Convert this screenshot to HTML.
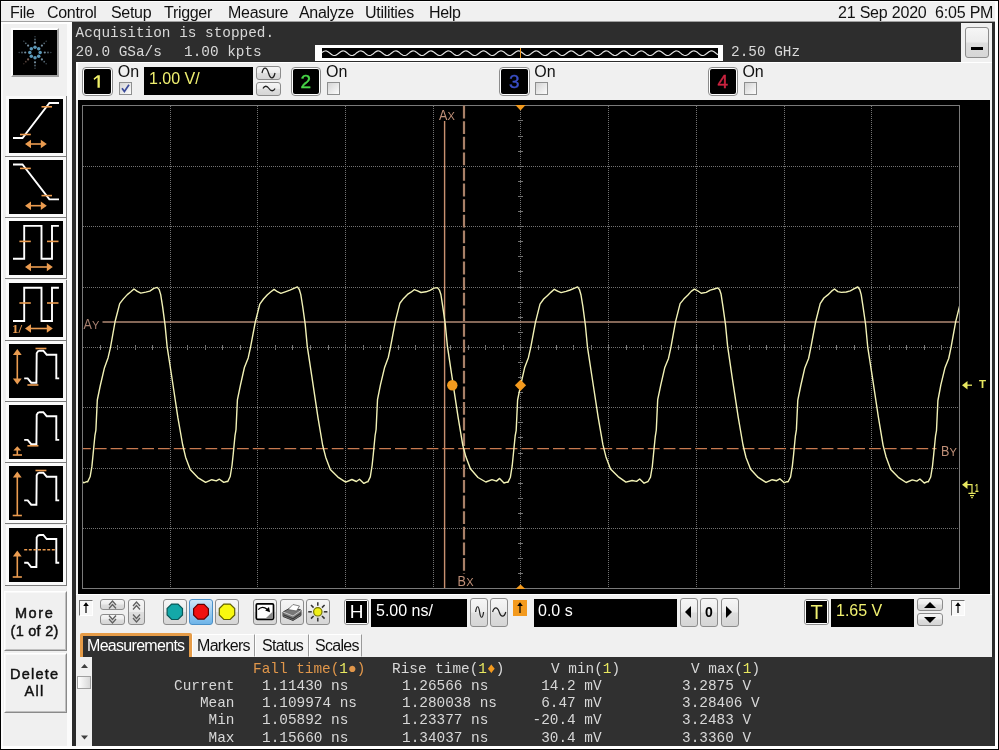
<!DOCTYPE html><html><head><meta charset="utf-8"><title>scope</title><style>
html,body{margin:0;padding:0;}
body{width:999px;height:750px;background:#000;position:relative;overflow:hidden;font-family:"Liberation Sans",sans-serif;}
.abs{position:absolute;}
div,span{position:absolute;box-sizing:border-box;white-space:pre;}
.menu{font-size:16px;color:#111;top:2.5px;line-height:19px;letter-spacing:-.3px;}
.mono{font-family:"Liberation Mono",monospace;font-size:14.4px;line-height:17px;color:#d8d8d8;}
.btn{border:1px solid #8c8c8c;border-radius:3px;background:linear-gradient(#f6f6f6,#ececec 48%,#dedede 52%,#d6d6d6);}
.field{background:#000;}
.icon{background:#000;overflow:hidden;}
.sbt{font-size:14.5px;line-height:18px;text-align:center;color:#111;letter-spacing:.6px;-webkit-text-stroke:.45px #111;}
.ftxt{font-size:16px;line-height:22px;}
.tab{font-size:16px;line-height:19px;letter-spacing:-.7px;}
</style></head><body><div id="root" style="left:0;top:0;width:999px;height:750px;will-change:transform">
<div style="left:1px;top:1px;width:997px;height:748px;background:#fff"></div>
<div style="left:1px;top:1px;width:994px;height:745px;background:#f0f0f0"></div>
<div style="left:1px;top:1px;width:994px;height:1px;background:#fcfcfc"></div>
<span class="menu" style="left:10px">File</span>
<span class="menu" style="left:47px">Control</span>
<span class="menu" style="left:111px">Setup</span>
<span class="menu" style="left:164px">Trigger</span>
<span class="menu" style="left:228px">Measure</span>
<span class="menu" style="left:299px">Analyze</span>
<span class="menu" style="left:365px">Utilities</span>
<span class="menu" style="left:429px">Help</span>
<span class="menu" style="left:838px;letter-spacing:-.2px">21 Sep 2020  6:05 PM</span>
<div style="left:1px;top:21px;width:994px;height:1px;background:#a0a0a0"></div>
<div style="left:1px;top:22px;width:71px;height:2px;background:#fff"></div>
<div style="left:72px;top:22px;width:923px;height:724px;background:#2b2b2b"></div>
<div style="left:76px;top:23px;width:916px;height:723px;background:#f0f0f0"></div>
<div style="left:72px;top:22px;width:889px;height:40px;background:#2d2d2d"></div>
<span class="mono" style="left:75.5px;top:25px">Acquisition is stopped.</span>
<span class="mono" style="left:75.5px;top:43.5px">20.0 GSa/s</span>
<span class="mono" style="left:184px;top:43.5px">1.00 kpts</span>
<span class="mono" style="left:731px;top:43.5px">2.50 GHz</span>
<div style="left:315px;top:45px;width:408px;height:15.5px;background:#fff"></div>
<div style="left:322px;top:48px;width:396px;height:10px;background:#000"></div>
<svg class="abs" style="left:0;top:0" width="999" height="70"><polyline points="322.0,52.6 323.0,51.8 324.0,51.3 325.0,51.0 326.0,50.9 327.0,51.2 328.0,51.7 329.0,52.4 330.0,53.2 331.0,54.0 332.0,54.7 333.0,55.2 334.0,55.5 335.0,55.4 336.0,55.1 337.0,54.6 338.0,53.8 339.0,53.0 340.0,52.2 341.0,51.5 342.0,51.1 343.0,50.9 344.0,51.0 345.0,51.4 346.0,52.0 347.0,52.8 348.0,53.6 349.0,54.4 350.0,55.0 351.0,55.4 352.0,55.5 353.0,55.3 354.0,54.9 355.0,54.2 356.0,53.4 357.0,52.6 358.0,51.9 359.0,51.3 360.0,51.0 361.0,50.9 362.0,51.2 363.0,51.6 364.0,52.3 365.0,53.1 366.0,54.0 367.0,54.7 368.0,55.2 369.0,55.5 370.0,55.5 371.0,55.2 372.0,54.6 373.0,53.9 374.0,53.1 375.0,52.3 376.0,51.6 377.0,51.1 378.0,50.9 379.0,51.0 380.0,51.4 381.0,51.9 382.0,52.7 383.0,53.5 384.0,54.3 385.0,54.9 386.0,55.4 387.0,55.5 388.0,55.4 389.0,54.9 390.0,54.3 391.0,53.5 392.0,52.7 393.0,51.9 394.0,51.3 395.0,51.0 396.0,50.9 397.0,51.1 398.0,51.6 399.0,52.3 400.0,53.1 401.0,53.9 402.0,54.6 403.0,55.2 404.0,55.5 405.0,55.5 406.0,55.2 407.0,54.7 408.0,53.9 409.0,53.1 410.0,52.3 411.0,51.6 412.0,51.1 413.0,50.9 414.0,51.0 415.0,51.3 416.0,51.9 417.0,52.6 418.0,53.5 419.0,54.2 420.0,54.9 421.0,55.3 422.0,55.5 423.0,55.4 424.0,55.0 425.0,54.3 426.0,53.6 427.0,52.8 428.0,52.0 429.0,51.4 430.0,51.0 431.0,50.9 432.0,51.1 433.0,51.6 434.0,52.2 435.0,53.0 436.0,53.8 437.0,54.6 438.0,55.1 439.0,55.4 440.0,55.5 441.0,55.2 442.0,54.7 443.0,54.0 444.0,53.2 445.0,52.4 446.0,51.7 447.0,51.2 448.0,50.9 449.0,51.0 450.0,51.3 451.0,51.8 452.0,52.6 453.0,53.4 454.0,54.2 455.0,54.9 456.0,55.3 457.0,55.5 458.0,55.4 459.0,55.0 460.0,54.4 461.0,53.6 462.0,52.8 463.0,52.0 464.0,51.4 465.0,51.0 466.0,50.9 467.0,51.1 468.0,51.5 469.0,52.2 470.0,52.9 471.0,53.8 472.0,54.5 473.0,55.1 474.0,55.4 475.0,55.5 476.0,55.3 477.0,54.8 478.0,54.1 479.0,53.3 480.0,52.5 481.0,51.7 482.0,51.2 483.0,50.9 484.0,50.9 485.0,51.2 486.0,51.8 487.0,52.5 488.0,53.3 489.0,54.1 490.0,54.8 491.0,55.3 492.0,55.5 493.0,55.4 494.0,55.1 495.0,54.5 496.0,53.7 497.0,52.9 498.0,52.1 499.0,51.5 500.0,51.0 501.0,50.9 502.0,51.0 503.0,51.5 504.0,52.1 505.0,52.9 506.0,53.7 507.0,54.5 508.0,55.1 509.0,55.4 510.0,55.5 511.0,55.3 512.0,54.8 513.0,54.1 514.0,53.3 515.0,52.5 516.0,51.8 517.0,51.2 518.0,50.9 519.0,50.9 520.0,51.2 521.0,51.7 522.0,52.5 523.0,53.3 524.0,54.1 525.0,54.8 526.0,55.3 527.0,55.5 528.0,55.4 529.0,55.1 530.0,54.5 531.0,53.8 532.0,52.9 533.0,52.2 534.0,51.5 535.0,51.1 536.0,50.9 537.0,51.0 538.0,51.4 539.0,52.0 540.0,52.8 541.0,53.6 542.0,54.4 543.0,55.0 544.0,55.4 545.0,55.5 546.0,55.3 547.0,54.9 548.0,54.2 549.0,53.4 550.0,52.6 551.0,51.8 552.0,51.3 553.0,51.0 554.0,50.9 555.0,51.2 556.0,51.7 557.0,52.4 558.0,53.2 559.0,54.0 560.0,54.7 561.0,55.2 562.0,55.5 563.0,55.4 564.0,55.1 565.0,54.6 566.0,53.8 567.0,53.0 568.0,52.2 569.0,51.6 570.0,51.1 571.0,50.9 572.0,51.0 573.0,51.4 574.0,52.0 575.0,52.8 576.0,53.6 577.0,54.3 578.0,55.0 579.0,55.4 580.0,55.5 581.0,55.3 582.0,54.9 583.0,54.2 584.0,53.5 585.0,52.6 586.0,51.9 587.0,51.3 588.0,51.0 589.0,50.9 590.0,51.1 591.0,51.6 592.0,52.3 593.0,53.1 594.0,53.9 595.0,54.7 596.0,55.2 597.0,55.5 598.0,55.5 599.0,55.2 600.0,54.6 601.0,53.9 602.0,53.1 603.0,52.3 604.0,51.6 605.0,51.1 606.0,50.9 607.0,51.0 608.0,51.3 609.0,51.9 610.0,52.7 611.0,53.5 612.0,54.3 613.0,54.9 614.0,55.4 615.0,55.5 616.0,55.4 617.0,54.9 618.0,54.3 619.0,53.5 620.0,52.7 621.0,51.9 622.0,51.4 623.0,51.0 624.0,50.9 625.0,51.1 626.0,51.6 627.0,52.3 628.0,53.1 629.0,53.9 630.0,54.6 631.0,55.2 632.0,55.5 633.0,55.5 634.0,55.2 635.0,54.7 636.0,54.0 637.0,53.1 638.0,52.3 639.0,51.6 640.0,51.2 641.0,50.9 642.0,51.0 643.0,51.3 644.0,51.9 645.0,52.6 646.0,53.4 647.0,54.2 648.0,54.9 649.0,55.3 650.0,55.5 651.0,55.4 652.0,55.0 653.0,54.4 654.0,53.6 655.0,52.8 656.0,52.0 657.0,51.4 658.0,51.0 659.0,50.9 660.0,51.1 661.0,51.5 662.0,52.2 663.0,53.0 664.0,53.8 665.0,54.6 666.0,55.1 667.0,55.4 668.0,55.5 669.0,55.2 670.0,54.7 671.0,54.0 672.0,53.2 673.0,52.4 674.0,51.7 675.0,51.2 676.0,50.9 677.0,51.0 678.0,51.3 679.0,51.8 680.0,52.6 681.0,53.4 682.0,54.2 683.0,54.8 684.0,55.3 685.0,55.5 686.0,55.4 687.0,55.0 688.0,54.4 689.0,53.7 690.0,52.8 691.0,52.1 692.0,51.4 693.0,51.0 694.0,50.9 695.0,51.1 696.0,51.5 697.0,52.1 698.0,52.9 699.0,53.8 700.0,54.5 701.0,55.1 702.0,55.4 703.0,55.5 704.0,55.3 705.0,54.8 706.0,54.1 707.0,53.3 708.0,52.5 709.0,51.7 710.0,51.2 711.0,50.9 712.0,50.9 713.0,51.2 714.0,51.8 715.0,52.5 716.0,53.3 717.0,54.1 718.0,54.8" fill="none" stroke="#e0e0e0" stroke-width="1.2"/><line x1="520.5" y1="48" x2="520.5" y2="58" stroke="#f39a1e" stroke-width="1"/></svg>
<div class="btn" style="left:965px;top:27px;width:24px;height:31px"></div>
<div style="left:971px;top:47px;width:12px;height:3px;background:#000"></div>
<div style="left:76px;top:62px;width:916px;height:1px;background:#fff"></div>
<div style="left:76px;top:62px;width:2px;height:38px;background:#fff"></div>
<div style="left:82.0px;top:66.5px;width:30.5px;height:29.5px;border:1px solid #8c8c8c;border-radius:4px;background:#fff"></div>
<div style="left:84.0px;top:68.5px;width:26.5px;height:25.5px;border-radius:2px;background:#000;color:#f0f068;font-size:19px;line-height:25.5px;text-align:center;-webkit-text-stroke:.4px #f0f068"></div>
<span style="left:117.8px;top:61.5px;font-size:16px;line-height:19px;color:#111">On</span>
<div style="left:119.0px;top:82px;width:13px;height:13px;border:1px solid #8e8f8f;background:linear-gradient(135deg,#d4d4d4,#fcfcfc)"></div>
<div style="left:290.5px;top:66.5px;width:30.5px;height:29.5px;border:1px solid #8c8c8c;border-radius:4px;background:#fff"></div>
<div style="left:292.5px;top:68.5px;width:26.5px;height:25.5px;border-radius:2px;background:#000;color:#48d848;font-size:19px;line-height:25.5px;text-align:center;-webkit-text-stroke:.4px #48d848">2</div>
<span style="left:326.0px;top:61.5px;font-size:16px;line-height:19px;color:#111">On</span>
<div style="left:327.2px;top:82px;width:13px;height:13px;border:1px solid #8e8f8f;background:linear-gradient(135deg,#d4d4d4,#fcfcfc)"></div>
<div style="left:499.0px;top:66.5px;width:30.5px;height:29.5px;border:1px solid #8c8c8c;border-radius:4px;background:#fff"></div>
<div style="left:501.0px;top:68.5px;width:26.5px;height:25.5px;border-radius:2px;background:#000;color:#3a4ec4;font-size:19px;line-height:25.5px;text-align:center;-webkit-text-stroke:.4px #3a4ec4">3</div>
<span style="left:534.1999999999999px;top:61.5px;font-size:16px;line-height:19px;color:#111">On</span>
<div style="left:535.4px;top:82px;width:13px;height:13px;border:1px solid #8e8f8f;background:linear-gradient(135deg,#d4d4d4,#fcfcfc)"></div>
<div style="left:707.5px;top:66.5px;width:30.5px;height:29.5px;border:1px solid #8c8c8c;border-radius:4px;background:#fff"></div>
<div style="left:709.5px;top:68.5px;width:26.5px;height:25.5px;border-radius:2px;background:#000;color:#cc2440;font-size:19px;line-height:25.5px;text-align:center;-webkit-text-stroke:.4px #cc2440">4</div>
<span style="left:742.3999999999999px;top:61.5px;font-size:16px;line-height:19px;color:#111">On</span>
<div style="left:743.6px;top:82px;width:13px;height:13px;border:1px solid #8e8f8f;background:linear-gradient(135deg,#d4d4d4,#fcfcfc)"></div>
<svg class="abs" style="left:82px;top:66px" width="31" height="31"><path d="M11.6,12.4 L15.6,9.2 L17.8,9.2 L17.8,21.8 L15.5,21.8 L15.5,11.6 L12.2,14 Z" fill="#f0f068"/></svg>
<svg class="abs" style="left:119px;top:82px" width="13" height="13"><path d="M3,6.2 L5.4,9.6 L10,2.8" fill="none" stroke="#3a4a9a" stroke-width="1.7"/></svg>
<div class="field" style="left:144px;top:67px;width:109px;height:28px"></div>
<span style="left:149px;top:68px;font-size:16px;line-height:22px;color:#f0f070">1.00 V/</span>
<div class="btn" style="left:256px;top:66px;width:25px;height:13.5px"></div>
<div class="btn" style="left:256px;top:82px;width:25px;height:13.5px"></div>
<svg class="abs" style="left:256px;top:66px" width="25" height="30"><path d="M6,7 C7.5,0.5 10.5,0.5 12.5,7 C14.5,13.5 17.5,13.5 19,7" fill="none" stroke="#202020" stroke-width="1.3"/><path d="M7,22.5 C8.5,19.5 11,19.5 13,22.5 C15,25.5 17.5,25.5 19,22.5" fill="none" stroke="#202020" stroke-width="1.3"/></svg>
<div style="left:78px;top:100px;width:912px;height:494px;background:#000"></div>
<div style="left:76px;top:594px;width:916px;height:1px;background:#fff"></div>
<svg class="abs" style="left:0;top:0" width="999" height="750" viewBox="0 0 999 750">
<rect x="82.5" y="105.5" width="877" height="483" fill="none" stroke="#7a7a7a" stroke-width="1"/>
<line x1="170.5" y1="106" x2="170.5" y2="588" stroke="#727272" stroke-width="1" stroke-dasharray="1 1"/>
<line x1="257.5" y1="106" x2="257.5" y2="588" stroke="#727272" stroke-width="1" stroke-dasharray="1 1"/>
<line x1="345.5" y1="106" x2="345.5" y2="588" stroke="#727272" stroke-width="1" stroke-dasharray="1 1"/>
<line x1="433.5" y1="106" x2="433.5" y2="588" stroke="#727272" stroke-width="1" stroke-dasharray="1 1"/>
<line x1="520.5" y1="106" x2="520.5" y2="588" stroke="#727272" stroke-width="1" stroke-dasharray="1 1"/>
<line x1="608.5" y1="106" x2="608.5" y2="588" stroke="#727272" stroke-width="1" stroke-dasharray="1 1"/>
<line x1="696.5" y1="106" x2="696.5" y2="588" stroke="#727272" stroke-width="1" stroke-dasharray="1 1"/>
<line x1="784.5" y1="106" x2="784.5" y2="588" stroke="#727272" stroke-width="1" stroke-dasharray="1 1"/>
<line x1="871.5" y1="106" x2="871.5" y2="588" stroke="#727272" stroke-width="1" stroke-dasharray="1 1"/>
<line x1="83" y1="166.5" x2="959" y2="166.5" stroke="#727272" stroke-width="1" stroke-dasharray="1 1"/>
<line x1="83" y1="226.5" x2="959" y2="226.5" stroke="#727272" stroke-width="1" stroke-dasharray="1 1"/>
<line x1="83" y1="287.5" x2="959" y2="287.5" stroke="#727272" stroke-width="1" stroke-dasharray="1 1"/>
<line x1="83" y1="347.5" x2="959" y2="347.5" stroke="#727272" stroke-width="1" stroke-dasharray="1 1"/>
<line x1="83" y1="407.5" x2="959" y2="407.5" stroke="#727272" stroke-width="1" stroke-dasharray="1 1"/>
<line x1="83" y1="468.5" x2="959" y2="468.5" stroke="#727272" stroke-width="1" stroke-dasharray="1 1"/>
<line x1="83" y1="528.5" x2="959" y2="528.5" stroke="#727272" stroke-width="1" stroke-dasharray="1 1"/>
<line x1="100.5" y1="345.0" x2="100.5" y2="350.0" stroke="#727272" stroke-width="1"/>
<line x1="117.5" y1="345.0" x2="117.5" y2="350.0" stroke="#727272" stroke-width="1"/>
<line x1="135.5" y1="345.0" x2="135.5" y2="350.0" stroke="#727272" stroke-width="1"/>
<line x1="152.5" y1="345.0" x2="152.5" y2="350.0" stroke="#727272" stroke-width="1"/>
<line x1="170.5" y1="345.0" x2="170.5" y2="350.0" stroke="#727272" stroke-width="1"/>
<line x1="187.5" y1="345.0" x2="187.5" y2="350.0" stroke="#727272" stroke-width="1"/>
<line x1="205.5" y1="345.0" x2="205.5" y2="350.0" stroke="#727272" stroke-width="1"/>
<line x1="222.5" y1="345.0" x2="222.5" y2="350.0" stroke="#727272" stroke-width="1"/>
<line x1="240.5" y1="345.0" x2="240.5" y2="350.0" stroke="#727272" stroke-width="1"/>
<line x1="257.5" y1="345.0" x2="257.5" y2="350.0" stroke="#727272" stroke-width="1"/>
<line x1="275.5" y1="345.0" x2="275.5" y2="350.0" stroke="#727272" stroke-width="1"/>
<line x1="292.5" y1="345.0" x2="292.5" y2="350.0" stroke="#727272" stroke-width="1"/>
<line x1="310.5" y1="345.0" x2="310.5" y2="350.0" stroke="#727272" stroke-width="1"/>
<line x1="328.5" y1="345.0" x2="328.5" y2="350.0" stroke="#727272" stroke-width="1"/>
<line x1="345.5" y1="345.0" x2="345.5" y2="350.0" stroke="#727272" stroke-width="1"/>
<line x1="363.5" y1="345.0" x2="363.5" y2="350.0" stroke="#727272" stroke-width="1"/>
<line x1="380.5" y1="345.0" x2="380.5" y2="350.0" stroke="#727272" stroke-width="1"/>
<line x1="398.5" y1="345.0" x2="398.5" y2="350.0" stroke="#727272" stroke-width="1"/>
<line x1="415.5" y1="345.0" x2="415.5" y2="350.0" stroke="#727272" stroke-width="1"/>
<line x1="433.5" y1="345.0" x2="433.5" y2="350.0" stroke="#727272" stroke-width="1"/>
<line x1="450.5" y1="345.0" x2="450.5" y2="350.0" stroke="#727272" stroke-width="1"/>
<line x1="468.5" y1="345.0" x2="468.5" y2="350.0" stroke="#727272" stroke-width="1"/>
<line x1="485.5" y1="345.0" x2="485.5" y2="350.0" stroke="#727272" stroke-width="1"/>
<line x1="503.5" y1="345.0" x2="503.5" y2="350.0" stroke="#727272" stroke-width="1"/>
<line x1="520.5" y1="345.0" x2="520.5" y2="350.0" stroke="#727272" stroke-width="1"/>
<line x1="538.5" y1="345.0" x2="538.5" y2="350.0" stroke="#727272" stroke-width="1"/>
<line x1="556.5" y1="345.0" x2="556.5" y2="350.0" stroke="#727272" stroke-width="1"/>
<line x1="573.5" y1="345.0" x2="573.5" y2="350.0" stroke="#727272" stroke-width="1"/>
<line x1="591.5" y1="345.0" x2="591.5" y2="350.0" stroke="#727272" stroke-width="1"/>
<line x1="608.5" y1="345.0" x2="608.5" y2="350.0" stroke="#727272" stroke-width="1"/>
<line x1="626.5" y1="345.0" x2="626.5" y2="350.0" stroke="#727272" stroke-width="1"/>
<line x1="643.5" y1="345.0" x2="643.5" y2="350.0" stroke="#727272" stroke-width="1"/>
<line x1="661.5" y1="345.0" x2="661.5" y2="350.0" stroke="#727272" stroke-width="1"/>
<line x1="678.5" y1="345.0" x2="678.5" y2="350.0" stroke="#727272" stroke-width="1"/>
<line x1="696.5" y1="345.0" x2="696.5" y2="350.0" stroke="#727272" stroke-width="1"/>
<line x1="713.5" y1="345.0" x2="713.5" y2="350.0" stroke="#727272" stroke-width="1"/>
<line x1="731.5" y1="345.0" x2="731.5" y2="350.0" stroke="#727272" stroke-width="1"/>
<line x1="749.5" y1="345.0" x2="749.5" y2="350.0" stroke="#727272" stroke-width="1"/>
<line x1="766.5" y1="345.0" x2="766.5" y2="350.0" stroke="#727272" stroke-width="1"/>
<line x1="784.5" y1="345.0" x2="784.5" y2="350.0" stroke="#727272" stroke-width="1"/>
<line x1="801.5" y1="345.0" x2="801.5" y2="350.0" stroke="#727272" stroke-width="1"/>
<line x1="819.5" y1="345.0" x2="819.5" y2="350.0" stroke="#727272" stroke-width="1"/>
<line x1="836.5" y1="345.0" x2="836.5" y2="350.0" stroke="#727272" stroke-width="1"/>
<line x1="854.5" y1="345.0" x2="854.5" y2="350.0" stroke="#727272" stroke-width="1"/>
<line x1="871.5" y1="345.0" x2="871.5" y2="350.0" stroke="#727272" stroke-width="1"/>
<line x1="889.5" y1="345.0" x2="889.5" y2="350.0" stroke="#727272" stroke-width="1"/>
<line x1="906.5" y1="345.0" x2="906.5" y2="350.0" stroke="#727272" stroke-width="1"/>
<line x1="924.5" y1="345.0" x2="924.5" y2="350.0" stroke="#727272" stroke-width="1"/>
<line x1="941.5" y1="345.0" x2="941.5" y2="350.0" stroke="#727272" stroke-width="1"/>
<line x1="518.0" y1="120.5" x2="523.0" y2="120.5" stroke="#727272" stroke-width="1"/>
<line x1="518.0" y1="136.5" x2="523.0" y2="136.5" stroke="#727272" stroke-width="1"/>
<line x1="518.0" y1="151.5" x2="523.0" y2="151.5" stroke="#727272" stroke-width="1"/>
<line x1="518.0" y1="166.5" x2="523.0" y2="166.5" stroke="#727272" stroke-width="1"/>
<line x1="518.0" y1="181.5" x2="523.0" y2="181.5" stroke="#727272" stroke-width="1"/>
<line x1="518.0" y1="196.5" x2="523.0" y2="196.5" stroke="#727272" stroke-width="1"/>
<line x1="518.0" y1="211.5" x2="523.0" y2="211.5" stroke="#727272" stroke-width="1"/>
<line x1="518.0" y1="226.5" x2="523.0" y2="226.5" stroke="#727272" stroke-width="1"/>
<line x1="518.0" y1="241.5" x2="523.0" y2="241.5" stroke="#727272" stroke-width="1"/>
<line x1="518.0" y1="256.5" x2="523.0" y2="256.5" stroke="#727272" stroke-width="1"/>
<line x1="518.0" y1="271.5" x2="523.0" y2="271.5" stroke="#727272" stroke-width="1"/>
<line x1="518.0" y1="287.5" x2="523.0" y2="287.5" stroke="#727272" stroke-width="1"/>
<line x1="518.0" y1="302.5" x2="523.0" y2="302.5" stroke="#727272" stroke-width="1"/>
<line x1="518.0" y1="317.5" x2="523.0" y2="317.5" stroke="#727272" stroke-width="1"/>
<line x1="518.0" y1="332.5" x2="523.0" y2="332.5" stroke="#727272" stroke-width="1"/>
<line x1="518.0" y1="347.5" x2="523.0" y2="347.5" stroke="#727272" stroke-width="1"/>
<line x1="518.0" y1="362.5" x2="523.0" y2="362.5" stroke="#727272" stroke-width="1"/>
<line x1="518.0" y1="377.5" x2="523.0" y2="377.5" stroke="#727272" stroke-width="1"/>
<line x1="518.0" y1="392.5" x2="523.0" y2="392.5" stroke="#727272" stroke-width="1"/>
<line x1="518.0" y1="407.5" x2="523.0" y2="407.5" stroke="#727272" stroke-width="1"/>
<line x1="518.0" y1="422.5" x2="523.0" y2="422.5" stroke="#727272" stroke-width="1"/>
<line x1="518.0" y1="437.5" x2="523.0" y2="437.5" stroke="#727272" stroke-width="1"/>
<line x1="518.0" y1="453.5" x2="523.0" y2="453.5" stroke="#727272" stroke-width="1"/>
<line x1="518.0" y1="468.5" x2="523.0" y2="468.5" stroke="#727272" stroke-width="1"/>
<line x1="518.0" y1="483.5" x2="523.0" y2="483.5" stroke="#727272" stroke-width="1"/>
<line x1="518.0" y1="498.5" x2="523.0" y2="498.5" stroke="#727272" stroke-width="1"/>
<line x1="518.0" y1="513.5" x2="523.0" y2="513.5" stroke="#727272" stroke-width="1"/>
<line x1="518.0" y1="528.5" x2="523.0" y2="528.5" stroke="#727272" stroke-width="1"/>
<line x1="518.0" y1="543.5" x2="523.0" y2="543.5" stroke="#727272" stroke-width="1"/>
<line x1="518.0" y1="558.5" x2="523.0" y2="558.5" stroke="#727272" stroke-width="1"/>
<line x1="518.0" y1="573.5" x2="523.0" y2="573.5" stroke="#727272" stroke-width="1"/>
<clipPath id="pc"><rect x="83" y="106" width="876" height="482"/></clipPath>
<line x1="444.6" y1="121" x2="444.6" y2="588" stroke="#c89070" stroke-width="1.4"/>
<line x1="464" y1="105.6" x2="464" y2="574" stroke="#a88068" stroke-width="2.2" stroke-dasharray="12.8 2.8"/>
<line x1="102.5" y1="322" x2="959" y2="322" stroke="#b08a74" stroke-width="1.6"/>
<line x1="83" y1="448.6" x2="936.5" y2="448.6" stroke="#c87a50" stroke-width="1.15" stroke-dasharray="11.8 4" stroke-dashoffset="4"/>
<path d="M79.3,478.9 L83.7,482.8 L86.7,481.6 L87.6,481.9 L90.1,476.8 L91.9,466.4 L93.1,454.2 L94.9,435.7 L95.9,430.1 L97.3,400.0 L100.3,385.5 L104.3,368.3 L108.1,357.7 L110.5,347.3 L115.1,321.5 L119.7,303.6 L123.4,298.9 L127.3,294.6 L130.8,291.8 L134.0,289.0 L137.3,291.4 L140.8,293.1 L145.8,292.1 L149.8,291.1 L153.8,288.4 L157.3,287.4 L159.2,289.6 L160.7,294.6 L162.6,306.7 L165.1,325.4 L167.2,347.2 L171.8,377.0 L177.8,417.2 L182.6,444.5 L185.6,457.2 L190.2,469.6 L197.8,477.6 L205.6,482.4 L211.8,479.7 L216.3,480.9 L219.4,479.2 L223.8,482.4 L226.8,481.5 L227.7,481.6 L230.2,476.5 L232.0,465.5 L233.2,454.3 L235.0,435.6 L236.0,429.7 L237.4,399.9 L240.4,385.4 L244.4,367.5 L248.2,357.9 L250.6,346.8 L255.2,322.5 L259.8,304.1 L263.5,299.0 L267.4,294.7 L270.9,291.7 L274.1,289.4 L277.4,291.7 L280.9,293.3 L285.9,291.6 L289.9,290.2 L293.9,288.3 L297.4,286.9 L299.3,289.5 L300.8,294.6 L302.7,306.5 L305.2,324.4 L307.3,346.6 L311.9,376.8 L317.9,417.1 L322.7,445.5 L325.7,457.2 L330.3,469.4 L337.9,477.1 L345.7,482.2 L351.9,479.5 L356.4,481.5 L359.5,479.3 L363.9,483.4 L366.9,481.9 L367.8,481.9 L370.3,476.9 L372.1,465.5 L373.3,454.2 L375.1,435.5 L376.1,429.5 L377.5,399.7 L380.5,384.6 L384.5,367.8 L388.3,357.5 L390.7,346.1 L395.3,321.6 L399.9,303.2 L403.6,298.4 L407.5,294.4 L411.0,292.2 L414.2,289.7 L417.5,290.8 L421.0,292.5 L426.0,291.8 L430.0,290.4 L434.0,288.1 L437.5,287.6 L439.4,290.1 L440.9,294.5 L442.8,306.8 L445.3,324.5 L447.4,346.2 L452.0,376.8 L458.0,416.7 L462.8,445.4 L465.8,456.6 L470.4,468.8 L478.0,477.5 L485.8,482.0 L492.0,479.6 L496.5,481.1 L499.6,478.4 L504.0,483.0 L507.0,482.1 L507.9,482.4 L510.4,477.2 L512.2,465.7 L513.4,453.8 L515.2,435.6 L516.2,430.3 L517.6,400.0 L520.6,385.3 L524.6,367.8 L528.4,357.7 L530.8,347.1 L535.4,322.6 L540.0,304.1 L543.7,299.0 L547.6,295.4 L551.1,292.1 L554.3,289.3 L557.6,291.2 L561.1,292.6 L566.1,291.4 L570.1,290.0 L574.1,288.3 L577.6,286.9 L579.5,289.7 L581.0,295.0 L582.9,306.7 L585.4,325.5 L587.5,347.3 L592.1,377.5 L598.1,416.8 L602.9,444.7 L605.9,456.7 L610.5,469.0 L618.1,476.6 L625.9,482.1 L632.1,480.5 L636.6,481.4 L639.7,479.0 L644.1,483.2 L647.1,481.9 L648.0,481.5 L650.5,477.2 L652.3,466.5 L653.5,454.3 L655.3,436.3 L656.3,430.0 L657.7,399.6 L660.7,385.3 L664.7,367.8 L668.5,358.4 L670.9,347.3 L675.5,321.9 L680.1,303.6 L683.8,299.1 L687.7,295.3 L691.2,291.4 L694.4,289.2 L697.7,290.8 L701.2,293.3 L706.2,292.4 L710.2,290.2 L714.2,289.0 L717.7,287.8 L719.6,289.7 L721.1,294.3 L723.0,306.9 L725.5,324.6 L727.6,346.1 L732.2,377.6 L738.2,417.2 L743.0,445.0 L746.0,457.5 L750.6,469.3 L758.2,477.4 L766.0,482.4 L772.2,479.7 L776.7,480.7 L779.8,478.8 L784.2,482.7 L787.2,481.6 L788.1,481.7 L790.6,476.9 L792.4,465.6 L793.6,454.5 L795.4,435.8 L796.4,429.9 L797.8,400.1 L800.8,385.5 L804.8,367.9 L808.6,358.5 L811.0,346.7 L815.6,322.0 L820.2,303.7 L823.9,298.0 L827.8,294.9 L831.3,291.4 L834.5,289.0 L837.8,291.6 L841.3,292.4 L846.3,292.0 L850.3,290.9 L854.3,288.7 L857.8,287.0 L859.7,289.5 L861.2,294.6 L863.1,307.1 L865.6,324.5 L867.7,346.8 L872.3,376.7 L878.3,416.7 L883.1,445.3 L886.1,457.0 L890.7,469.5 L898.3,477.3 L906.1,482.5 L912.3,479.9 L916.8,481.1 L919.9,479.0 L924.3,483.0 L927.3,481.7 L928.2,481.9 L930.7,477.0 L932.5,466.0 L933.7,454.5 L935.5,436.2 L936.5,430.5 L937.9,400.5 L940.9,384.7 L944.9,368.1 L948.7,358.5 L951.1,347.1 L955.7,321.6 L960.3,303.2" fill="none" stroke="#f2f2b6" stroke-width="1.4" stroke-linejoin="round" clip-path="url(#pc)"/>
<text x="439" y="120.2" font-family="Liberation Sans" font-size="15" fill="#c09078" textLength="8.4" lengthAdjust="spacingAndGlyphs">A</text>
<text x="447.6" y="120.2" font-family="Liberation Sans" font-size="10.5" fill="#c09078" textLength="7.4" lengthAdjust="spacingAndGlyphs">X</text>
<text x="457.6" y="586.2" font-family="Liberation Sans" font-size="15" fill="#c09078" textLength="8.4" lengthAdjust="spacingAndGlyphs">B</text>
<text x="466.20000000000005" y="586.2" font-family="Liberation Sans" font-size="10.5" fill="#c09078" textLength="7.4" lengthAdjust="spacingAndGlyphs">X</text>
<text x="83.4" y="329.4" font-family="Liberation Sans" font-size="15" fill="#a88070" textLength="8.4" lengthAdjust="spacingAndGlyphs">A</text>
<text x="92.0" y="329.4" font-family="Liberation Sans" font-size="10.5" fill="#a88070" textLength="7.4" lengthAdjust="spacingAndGlyphs">Y</text>
<text x="941" y="455.8" font-family="Liberation Sans" font-size="15" fill="#c09078" textLength="8.4" lengthAdjust="spacingAndGlyphs">B</text>
<text x="949.6" y="455.8" font-family="Liberation Sans" font-size="10.5" fill="#c09078" textLength="7.4" lengthAdjust="spacingAndGlyphs">Y</text>
<path d="M962,385.2 L967.5,381 L967.5,389.4 Z" fill="#e8e860"/><line x1="967" y1="385.2" x2="972" y2="385.2" stroke="#e8e860" stroke-width="1.3"/>
<text x="979" y="387.6" font-family="Liberation Sans" font-weight="bold" font-size="11.5" fill="#e8e860">T</text>
<path d="M962,484.7 L967.5,480.5 L967.5,488.9 Z" fill="#e8e860"/><path d="M967,484.7 L972.6,484.7 M972,484.7 L972,493.4 M968.4,493.4 L975.6,493.4 M970,495.6 L974,495.6 M971.2,497.6 L972.8,497.6" stroke="#e8e860" stroke-width="1.2" fill="none"/>
<text x="975" y="491.6" font-family="Liberation Sans" font-weight="bold" font-size="10.5" fill="#e8e860" textLength="3.6" lengthAdjust="spacingAndGlyphs">1</text>
<circle cx="452.3" cy="385.3" r="5.2" fill="#f39a1e"/>
<path d="M520.5,379.7 L526.1,385.3 L520.5,390.9 L514.9,385.3 Z" fill="#f39a1e"/>
<path d="M515.4,105 L525.6,105 L520.5,110.4 Z" fill="#f39a1e"/>
<path d="M515.6,589 L525.4,589 L520.5,584.4 Z" fill="#f39a1e"/>
</svg>
<div style="left:79px;top:600px;width:14px;height:16px;background:#f8f8f8;border:1px solid;border-color:#707070 #fff #fff #707070"></div>
<svg class="abs" style="left:79px;top:600px" width="14" height="16"><line x1="7" y1="3.5" x2="7" y2="13" stroke="#000" stroke-width="1.2"/><path d="M7,2.2 L4.2,6 L9.8,6 Z" fill="#000"/></svg>
<div class="btn" style="left:100px;top:599px;width:25px;height:11px;"></div>
<div class="btn" style="left:100px;top:614px;width:25px;height:11px;"></div>
<div class="btn" style="left:128px;top:599px;width:17px;height:26px;"></div>
<div class="btn" style="left:163px;top:599px;width:24px;height:26px;"></div>
<div class="btn" style="left:189px;top:599px;width:24px;height:26px;background:linear-gradient(#cfe6f8,#9accf0 50%,#6eb4e8);border-color:#4a90c8;"></div>
<div class="btn" style="left:215px;top:599px;width:24px;height:26px;"></div>
<div class="btn" style="left:253px;top:599px;width:24px;height:26px;"></div>
<div class="btn" style="left:280px;top:599px;width:24px;height:26px;"></div>
<div class="btn" style="left:306px;top:599px;width:24px;height:26px;"></div>
<div style="left:344px;top:599px;width:25px;height:26px;border:1px solid #8c8c8c;border-radius:3px;background:#fff"></div>
<div style="left:346px;top:601px;width:21px;height:22px;background:#000;color:#fff;font-size:19px;line-height:22px;text-align:center">H</div>
<div class="field" style="left:371px;top:599px;width:96px;height:28px"></div>
<span class="ftxt" style="left:376px;top:600px;color:#fff">5.00 ns/</span>
<div class="btn" style="left:470px;top:598px;width:18px;height:29px;"></div>
<div class="btn" style="left:490px;top:598px;width:18px;height:29px;"></div>
<div style="left:513px;top:600px;width:14px;height:16px;background:#f39a1e"></div>
<svg class="abs" style="left:513px;top:600px" width="14" height="16"><line x1="7" y1="3.5" x2="7" y2="13" stroke="#000" stroke-width="1.2"/><path d="M7,2.2 L4.2,6 L9.8,6 Z" fill="#000"/></svg>
<div class="field" style="left:534px;top:599px;width:143px;height:28px"></div>
<span class="ftxt" style="left:538px;top:600px;color:#fff">0.0 s</span>
<div class="btn" style="left:680px;top:598px;width:18px;height:29px;"></div>
<div class="btn" style="left:700px;top:598px;width:18px;height:29px;"></div>
<div class="btn" style="left:721px;top:598px;width:18px;height:29px;"></div>
<span style="left:700px;top:603px;width:18px;text-align:center;font-size:14px;font-weight:bold;line-height:18px;color:#000">0</span>
<div style="left:804px;top:599px;width:25px;height:26px;border:1px solid #8c8c8c;border-radius:3px;background:#fff"></div>
<div style="left:806px;top:601px;width:21px;height:22px;background:#000;color:#f0f070;font-size:20px;line-height:22px;text-align:center">T</div>
<div class="field" style="left:831px;top:599px;width:83px;height:28px"></div>
<span class="ftxt" style="left:836px;top:600px;color:#f0f070">1.65 V</span>
<div class="btn" style="left:917px;top:598px;width:26px;height:13px;"></div>
<div class="btn" style="left:917px;top:613px;width:26px;height:13px;"></div>
<div style="left:951px;top:600px;width:14px;height:16px;background:#f8f8f8;border:1px solid;border-color:#707070 #fff #fff #707070"></div>
<svg class="abs" style="left:951px;top:600px" width="14" height="16"><line x1="7" y1="3.5" x2="7" y2="13" stroke="#000" stroke-width="1.2"/><path d="M7,2.2 L4.2,6 L9.8,6 Z" fill="#000"/></svg>
<svg class="abs" style="left:0;top:0" width="999" height="750"><polyline points="109.0,605 112.5,601 116.0,605" fill="none" stroke="#606060" stroke-width="1.3"/><polyline points="109.0,608.5 112.5,604.5 116.0,608.5" fill="none" stroke="#606060" stroke-width="1.3"/><polyline points="109.0,615.5 112.5,619.5 116.0,615.5" fill="none" stroke="#606060" stroke-width="1.3"/><polyline points="109.0,619 112.5,623 116.0,619" fill="none" stroke="#606060" stroke-width="1.3"/><polyline points="133.0,606 136.5,602 140.0,606" fill="none" stroke="#606060" stroke-width="1.3"/><polyline points="133.0,609.5 136.5,605.5 140.0,609.5" fill="none" stroke="#606060" stroke-width="1.3"/><polyline points="133.0,614.5 136.5,618.5 140.0,614.5" fill="none" stroke="#606060" stroke-width="1.3"/><polyline points="133.0,618 136.5,622 140.0,618" fill="none" stroke="#606060" stroke-width="1.3"/><polygon points="182.5,615.0 178.0,619.5 171.6,619.5 167.1,615.0 167.1,608.6 171.6,604.1 178.0,604.1 182.5,608.6" fill="#14a8a8" stroke="#0a5858" stroke-width="1.2"/><polygon points="208.4,614.9 204.1,619.2 197.9,619.2 193.6,614.9 193.6,608.7 197.9,604.4 204.1,604.4 208.4,608.7" fill="#f01010" stroke="#600000" stroke-width="1.2"/><polygon points="234.7,615.0 230.2,619.5 223.8,619.5 219.3,615.0 219.3,608.6 223.8,604.1 230.2,604.1 234.7,608.6" fill="#f8f810" stroke="#606000" stroke-width="1.2"/><rect x="256.3" y="603.9" width="17.2" height="15.4" rx="1.2" fill="#fff" stroke="#000" stroke-width="1.7"/><path d="M272.8,611.5 L272.8,618.6 L265.5,618.6 Z" fill="#8a8a8a"/><path d="M258.2,609.6 Q262,605.2 267.5,609.4" fill="none" stroke="#000" stroke-width="1.3"/><path d="M270,612.2 L265.2,610.6 L269,607 Z" fill="#000"/><path d="M283,612 L291,607.5 L301,610 L301,615.5 L293,620.5 L283,616.5 Z" fill="#787878" stroke="#404040" stroke-width="1"/><path d="M288,609.5 L293,604.5 L299.5,606 L296.5,611 Z" fill="#fff" stroke="#505050" stroke-width=".7"/><path d="M283,612 L293,616 L301,610.5" fill="none" stroke="#c8c8c8" stroke-width="1"/><path d="M284,615 L293,618.8 L300.5,613.6" fill="none" stroke="#3a3a3a" stroke-width="1.2"/><line x1="323.8" y1="611.8" x2="327.4" y2="611.8" stroke="#303030" stroke-width="1.5"/><line x1="322.0" y1="616.0" x2="324.6" y2="618.6" stroke="#303030" stroke-width="1.5"/><line x1="317.8" y1="617.8" x2="317.8" y2="621.4" stroke="#303030" stroke-width="1.5"/><line x1="313.6" y1="616.0" x2="311.0" y2="618.6" stroke="#303030" stroke-width="1.5"/><line x1="311.8" y1="611.8" x2="308.2" y2="611.8" stroke="#303030" stroke-width="1.5"/><line x1="313.6" y1="607.6" x2="311.0" y2="605.0" stroke="#303030" stroke-width="1.5"/><line x1="317.8" y1="605.8" x2="317.8" y2="602.2" stroke="#303030" stroke-width="1.5"/><line x1="322.0" y1="607.6" x2="324.6" y2="605.0" stroke="#303030" stroke-width="1.5"/><circle cx="317.8" cy="611.8" r="4.2" fill="#f0f018" stroke="#787800" stroke-width="1.2"/><path d="M475.6,612 C476.6,605 478.6,605 479.6,612 C480.6,619 482.6,619 483.6,612" fill="none" stroke="#202020" stroke-width="1.2"/><path d="M492.6,612 C494.2,606.5 497.4,606.5 499.2,612 C501,617.5 504.2,617.5 505.8,612" fill="none" stroke="#202020" stroke-width="1.2"/><path d="M685,612 L691,606 L691,618 Z" fill="#000"/><path d="M732,612 L726,606 L726,618 Z" fill="#000"/><path d="M924,608 L936,608 L930,602 Z" fill="#000"/><path d="M924,617 L936,617 L930,623 Z" fill="#000"/></svg>
<div style="left:80px;top:633px;width:112px;height:25px;background:#e69c48;border-radius:2px 2px 0 0"></div>
<div style="left:83px;top:636px;width:106px;height:22px;background:#303030"></div>
<span class="tab" style="left:87px;top:636px;color:#fff">Measurements</span>
<div style="left:192px;top:634px;width:63px;height:23px;background:#f4f4f4;border:1px solid;border-color:#fff #9a9a9a #f4f4f4 #fff"></div>
<span class="tab" style="left:197px;top:636px;color:#111">Markers</span>
<div style="left:255px;top:634px;width:54px;height:23px;background:#f4f4f4;border:1px solid;border-color:#fff #9a9a9a #f4f4f4 #fff"></div>
<span class="tab" style="left:262px;top:636px;color:#111">Status</span>
<div style="left:309px;top:634px;width:53px;height:23px;background:#f4f4f4;border:1px solid;border-color:#fff #9a9a9a #f4f4f4 #fff"></div>
<span class="tab" style="left:315px;top:636px;color:#111">Scales</span>
<div style="left:76px;top:657px;width:919px;height:89px;background:#303030"></div>
<div style="left:76px;top:657px;width:16px;height:89px;background:#f0f0f0"></div>
<div style="left:77px;top:676px;width:14px;height:13px;border:1px solid #a0a0a0;background:linear-gradient(90deg,#fff,#d8d8d8)"></div>
<svg class="abs" style="left:76px;top:657px" width="17" height="89"><path d="M5,11 L12,11 L8.5,7 Z" fill="#404040"/><path d="M5,78.5 L12,78.5 L8.5,82.5 Z" fill="#404040"/></svg>
<span class="mono" style="left:174.01999999999998px;top:677.6px;color:#d8d8d8">Current</span>
<span class="mono" style="left:199.94px;top:694.7px;color:#d8d8d8">Mean</span>
<span class="mono" style="left:208.57999999999998px;top:712.4px;color:#d8d8d8">Min</span>
<span class="mono" style="left:208.57999999999998px;top:729.6px;color:#d8d8d8">Max</span>
<span class="mono" style="left:253px;top:660.5px;color:#e0964a">Fall time(<span style="position:static;color:#e8e860">1</span>●)</span>
<span class="mono" style="left:392px;top:660.5px">Rise time(<span style="position:static;color:#e8e860">1</span><span style="position:static;color:#f39a1e">♦</span>)</span>
<span class="mono" style="left:551px;top:660.5px">V min(<span style="position:static;color:#e8e860">1</span>)</span>
<span class="mono" style="left:691px;top:660.5px">V max(<span style="position:static;color:#e8e860">1</span>)</span>
<span class="mono" style="left:262px;top:677.6px;color:#d8d8d8">1.11430 ns</span>
<span class="mono" style="left:262px;top:694.7px;color:#d8d8d8">1.109974 ns</span>
<span class="mono" style="left:262px;top:712.4px;color:#d8d8d8">1.05892 ns</span>
<span class="mono" style="left:262px;top:729.6px;color:#d8d8d8">1.15660 ns</span>
<span class="mono" style="left:402px;top:677.6px;color:#d8d8d8">1.26566 ns</span>
<span class="mono" style="left:402px;top:694.7px;color:#d8d8d8">1.280038 ns</span>
<span class="mono" style="left:402px;top:712.4px;color:#d8d8d8">1.23377 ns</span>
<span class="mono" style="left:402px;top:729.6px;color:#d8d8d8">1.34037 ns</span>
<span class="mono" style="left:532.5px;top:677.6px;color:#d8d8d8"> 14.2 mV</span>
<span class="mono" style="left:532.5px;top:694.7px;color:#d8d8d8"> 6.47 mV</span>
<span class="mono" style="left:532.5px;top:712.4px;color:#d8d8d8">-20.4 mV</span>
<span class="mono" style="left:532.5px;top:729.6px;color:#d8d8d8"> 30.4 mV</span>
<span class="mono" style="left:682px;top:677.6px;color:#d8d8d8">3.2875 V</span>
<span class="mono" style="left:682px;top:694.7px;color:#d8d8d8">3.28406 V</span>
<span class="mono" style="left:682px;top:712.4px;color:#d8d8d8">3.2483 V</span>
<span class="mono" style="left:682px;top:729.6px;color:#d8d8d8">3.3360 V</span>
<div style="left:67px;top:24px;width:5px;height:722px;background:#fbfbfb"></div>
<div style="left:1px;top:24px;width:2px;height:722px;background:#fbfbfb"></div>
<div style="left:11px;top:28px;width:48px;height:49px;border:2px solid;border-color:#fff #a0a0a0 #a0a0a0 #fff"></div>
<div style="left:13px;top:30px;width:44px;height:45px;background:#000"></div>
<svg class="abs" style="left:0;top:0" width="72" height="90"><circle cx="40.2" cy="52.5" r="1.75" fill="#5c98b8"/><circle cx="44.8" cy="52.5" r="1.1" fill="#8aa8bc" opacity="0.85"/><circle cx="48.0" cy="52.5" r="0.9" fill="#8aa8bc" opacity="0.6"/><circle cx="50.8" cy="52.5" r="0.8" fill="#8aa8bc" opacity="0.4"/><circle cx="38.7" cy="56.2" r="1.75" fill="#5c98b8"/><circle cx="41.9" cy="59.4" r="1.1" fill="#8aa8bc" opacity="0.85"/><circle cx="44.2" cy="61.7" r="0.9" fill="#8aa8bc" opacity="0.6"/><circle cx="46.2" cy="63.7" r="0.8" fill="#8aa8bc" opacity="0.4"/><circle cx="35.0" cy="57.7" r="1.75" fill="#5c98b8"/><circle cx="35.0" cy="62.3" r="1.1" fill="#8aa8bc" opacity="0.85"/><circle cx="35.0" cy="65.5" r="0.9" fill="#8aa8bc" opacity="0.6"/><circle cx="35.0" cy="68.3" r="0.8" fill="#8aa8bc" opacity="0.4"/><circle cx="31.3" cy="56.2" r="1.75" fill="#5c98b8"/><circle cx="28.1" cy="59.4" r="1.1" fill="#8a6c62" opacity="0.85"/><circle cx="25.8" cy="61.7" r="0.9" fill="#8a6c62" opacity="0.6"/><circle cx="23.8" cy="63.7" r="0.8" fill="#8a6c62" opacity="0.4"/><circle cx="29.8" cy="52.5" r="1.75" fill="#5c98b8"/><circle cx="25.2" cy="52.5" r="1.1" fill="#8aa8bc" opacity="0.85"/><circle cx="22.0" cy="52.5" r="0.9" fill="#8aa8bc" opacity="0.6"/><circle cx="19.2" cy="52.5" r="0.8" fill="#8aa8bc" opacity="0.4"/><circle cx="31.3" cy="48.8" r="1.75" fill="#5c98b8"/><circle cx="28.1" cy="45.6" r="1.1" fill="#8aa8bc" opacity="0.85"/><circle cx="25.8" cy="43.3" r="0.9" fill="#8aa8bc" opacity="0.6"/><circle cx="23.8" cy="41.3" r="0.8" fill="#8aa8bc" opacity="0.4"/><circle cx="35.0" cy="47.3" r="1.75" fill="#5c98b8"/><circle cx="35.0" cy="42.7" r="1.1" fill="#8aa8bc" opacity="0.85"/><circle cx="35.0" cy="39.5" r="0.9" fill="#8aa8bc" opacity="0.6"/><circle cx="35.0" cy="36.7" r="0.8" fill="#8aa8bc" opacity="0.4"/><circle cx="38.7" cy="48.8" r="1.75" fill="#5c98b8"/><circle cx="41.9" cy="45.6" r="1.1" fill="#8aa8bc" opacity="0.85"/><circle cx="44.2" cy="43.3" r="0.9" fill="#8aa8bc" opacity="0.6"/><circle cx="46.2" cy="41.3" r="0.8" fill="#8aa8bc" opacity="0.4"/></svg>
<div style="left:5px;top:96px;width:62px;height:61px;background:#fafafa;border:solid #7c7c7c;border-width:0 1px 1px 0"></div>
<div style="left:5px;top:96px;width:1px;height:60px;background:#f0f0f0"></div>
<div class="icon" style="left:9px;top:99px;width:54px;height:54px"><svg width="54" height="54" viewBox="0 0 54 54" style="position:absolute;left:0;top:0"><polyline points="4,39 13.5,39 40.4,4 50,4" fill="none" stroke="#ffffff" stroke-width="1.9" /><line x1="32.5" y1="7.8" x2="43" y2="7.8" stroke="#eb9c50" stroke-width="1.6"/><line x1="11" y1="35.5" x2="21.8" y2="35.5" stroke="#eb9c50" stroke-width="1.6"/><line x1="19" y1="45" x2="34.8" y2="45" stroke="#eb9c50" stroke-width="1.6"/><path d="M16,45 L22,40.8 L22,49.2 Z" fill="#eb9c50"/><path d="M37.8,45 L31.799999999999997,40.8 L31.799999999999997,49.2 Z" fill="#eb9c50"/></svg></div>
<div style="left:5px;top:157px;width:62px;height:61px;background:#fafafa;border:solid #7c7c7c;border-width:0 1px 1px 0"></div>
<div style="left:5px;top:157px;width:1px;height:60px;background:#f0f0f0"></div>
<div class="icon" style="left:9px;top:160px;width:54px;height:54px"><svg width="54" height="54" viewBox="0 0 54 54" style="position:absolute;left:0;top:0"><polyline points="4,4.5 13.5,4.5 40.4,39.4 50,39.4" fill="none" stroke="#ffffff" stroke-width="1.9" /><line x1="11" y1="8.4" x2="21.8" y2="8.4" stroke="#eb9c50" stroke-width="1.6"/><line x1="32.5" y1="35.6" x2="43" y2="35.6" stroke="#eb9c50" stroke-width="1.6"/><line x1="19" y1="45.7" x2="34.8" y2="45.7" stroke="#eb9c50" stroke-width="1.6"/><path d="M16,45.7 L22,41.5 L22,49.900000000000006 Z" fill="#eb9c50"/><path d="M37.8,45.7 L31.799999999999997,41.5 L31.799999999999997,49.900000000000006 Z" fill="#eb9c50"/></svg></div>
<div style="left:5px;top:218px;width:62px;height:61px;background:#fafafa;border:solid #7c7c7c;border-width:0 1px 1px 0"></div>
<div style="left:5px;top:218px;width:1px;height:60px;background:#f0f0f0"></div>
<div class="icon" style="left:9px;top:221px;width:54px;height:54px"><svg width="54" height="54" viewBox="0 0 54 54" style="position:absolute;left:0;top:0"><polyline points="4,37.7 15.2,37.7 15.2,4.9 32.5,4.9 32.5,37.7 43,37.7 43,4.9 49.9,4.9" fill="none" stroke="#ffffff" stroke-width="1.9" /><line x1="10.4" y1="20.4" x2="21.8" y2="20.4" stroke="#eb9c50" stroke-width="1.6"/><line x1="38" y1="20.4" x2="49.5" y2="20.4" stroke="#eb9c50" stroke-width="1.6"/><line x1="19" y1="46" x2="40.8" y2="46" stroke="#eb9c50" stroke-width="1.6"/><path d="M16,46 L22,41.8 L22,50.2 Z" fill="#eb9c50"/><path d="M43.8,46 L37.8,41.8 L37.8,50.2 Z" fill="#eb9c50"/></svg></div>
<div style="left:5px;top:280px;width:62px;height:61px;background:#fafafa;border:solid #7c7c7c;border-width:0 1px 1px 0"></div>
<div style="left:5px;top:280px;width:1px;height:60px;background:#f0f0f0"></div>
<div class="icon" style="left:9px;top:283px;width:54px;height:54px"><svg width="54" height="54" viewBox="0 0 54 54" style="position:absolute;left:0;top:0"><polyline points="4,38 15.2,38 15.2,4.8 32.5,4.8 32.5,38 43,38 43,4.8 49.9,4.8" fill="none" stroke="#ffffff" stroke-width="1.9" /><line x1="10.4" y1="20" x2="21.8" y2="20" stroke="#eb9c50" stroke-width="1.6"/><line x1="38" y1="20" x2="49.5" y2="20" stroke="#eb9c50" stroke-width="1.6"/><line x1="19" y1="45.5" x2="40.8" y2="45.5" stroke="#eb9c50" stroke-width="1.6"/><path d="M16,45.5 L22,41.3 L22,49.7 Z" fill="#eb9c50"/><path d="M43.8,45.5 L37.8,41.3 L37.8,49.7 Z" fill="#eb9c50"/><text x="3" y="50" font-family="Liberation Serif" font-weight="bold" font-size="13" fill="#eb9c50">1/</text></svg></div>
<div style="left:5px;top:341px;width:62px;height:61px;background:#fafafa;border:solid #7c7c7c;border-width:0 1px 1px 0"></div>
<div style="left:5px;top:341px;width:1px;height:60px;background:#f0f0f0"></div>
<div class="icon" style="left:9px;top:344px;width:54px;height:54px"><svg width="54" height="54" viewBox="0 0 54 54" style="position:absolute;left:0;top:0"><polyline points="15.2,34.4 18.7,34.4 22.2,38.7 27.4,38.7 27.7,9.3 29,7.2 30.8,6.7 34.3,6.7 37.7,10.7 47.3,10.7 47.3,34.4 50.2,34.4" fill="none" stroke="#ffffff" stroke-width="1.9" /><line x1="26.5" y1="4.5" x2="37.4" y2="4.5" stroke="#eb9c50" stroke-width="1.6"/><line x1="18.4" y1="41" x2="29.4" y2="41" stroke="#eb9c50" stroke-width="1.6"/><line x1="8.3" y1="8" x2="8.3" y2="37.5" stroke="#eb9c50" stroke-width="1.6"/><path d="M8.3,5 L3.9000000000000004,11 L12.700000000000001,11 Z" fill="#eb9c50"/><path d="M8.3,40.5 L3.9000000000000004,34.5 L12.700000000000001,34.5 Z" fill="#eb9c50"/></svg></div>
<div style="left:5px;top:402px;width:62px;height:61px;background:#fafafa;border:solid #7c7c7c;border-width:0 1px 1px 0"></div>
<div style="left:5px;top:402px;width:1px;height:60px;background:#f0f0f0"></div>
<div class="icon" style="left:9px;top:405px;width:54px;height:54px"><svg width="54" height="54" viewBox="0 0 54 54" style="position:absolute;left:0;top:0"><polyline points="15.2,34.9 18.7,34.9 22.2,39.2 27.4,39.2 27.7,9.8 29,7.7 30.8,7.2 34.3,7.2 37.7,11.2 47.3,11.2 47.3,34.9 50.2,34.9" fill="none" stroke="#ffffff" stroke-width="1.9" /><line x1="18.4" y1="40.8" x2="29.4" y2="40.8" stroke="#eb9c50" stroke-width="1.6"/><path d="M8.3,41.3 L4.4,45.6 L12.2,45.6 Z" fill="#eb9c50"/><line x1="8.3" y1="45" x2="8.3" y2="50" stroke="#eb9c50" stroke-width="1.6"/><line x1="3.8" y1="50" x2="13" y2="50" stroke="#eb9c50" stroke-width="1.6"/></svg></div>
<div style="left:5px;top:463px;width:62px;height:61px;background:#fafafa;border:solid #7c7c7c;border-width:0 1px 1px 0"></div>
<div style="left:5px;top:463px;width:1px;height:60px;background:#f0f0f0"></div>
<div class="icon" style="left:9px;top:466px;width:54px;height:54px"><svg width="54" height="54" viewBox="0 0 54 54" style="position:absolute;left:0;top:0"><polyline points="15.2,34.4 18.7,34.4 22.2,38.7 27.4,38.7 27.7,9.3 29,7.2 30.8,6.7 34.3,6.7 37.7,10.7 47.3,10.7 47.3,34.4 50.2,34.4" fill="none" stroke="#ffffff" stroke-width="1.9" /><line x1="26.5" y1="4.5" x2="37.4" y2="4.5" stroke="#eb9c50" stroke-width="1.6"/><line x1="8.3" y1="8.4" x2="8.3" y2="49.5" stroke="#eb9c50" stroke-width="1.6"/><path d="M8.3,5.4 L3.9000000000000004,11.4 L12.700000000000001,11.4 Z" fill="#eb9c50"/><line x1="3.700000000000001" y1="49.5" x2="12.9" y2="49.5" stroke="#eb9c50" stroke-width="1.6"/></svg></div>
<div style="left:5px;top:525px;width:62px;height:61px;background:#fafafa;border:solid #7c7c7c;border-width:0 1px 1px 0"></div>
<div style="left:5px;top:525px;width:1px;height:60px;background:#f0f0f0"></div>
<div class="icon" style="left:9px;top:528px;width:54px;height:54px"><svg width="54" height="54" viewBox="0 0 54 54" style="position:absolute;left:0;top:0"><polyline points="15.2,34.699999999999996 18.7,34.699999999999996 22.2,39.0 27.4,39.0 27.7,9.600000000000001 29,7.5 30.8,7.0 34.3,7.0 37.7,11.0 47.3,11.0 47.3,34.699999999999996 50.2,34.699999999999996" fill="none" stroke="#ffffff" stroke-width="1.9" /><line x1="15.2" y1="21.8" x2="47.3" y2="21.8" stroke="#eb9c50" stroke-width="1.6" stroke-dasharray="3 1.6"/><line x1="8.3" y1="25.6" x2="8.3" y2="49" stroke="#eb9c50" stroke-width="1.6"/><path d="M8.3,22.6 L3.9000000000000004,28.6 L12.700000000000001,28.6 Z" fill="#eb9c50"/><line x1="3.700000000000001" y1="49" x2="12.9" y2="49" stroke="#eb9c50" stroke-width="1.6"/></svg></div>
<div style="left:4px;top:591px;width:63px;height:60px;border:1px solid;border-color:#fff #8a8a8a #8a8a8a #fff;background:#f0f0f0"></div>
<div style="left:5px;top:592px;width:61px;height:58px;border:1px solid;border-color:#f8f8f8 #c0c0c0 #c0c0c0 #f8f8f8"></div>
<div class="sbt" style="left:2.6px;top:604px;width:64px;letter-spacing:1.6px">More</div>
<div class="sbt" style="left:2.6px;top:622px;width:64px;letter-spacing:0.27px">(1 of 2)</div>
<div style="left:4px;top:653px;width:63px;height:60px;border:1px solid;border-color:#fff #8a8a8a #8a8a8a #fff;background:#f0f0f0"></div>
<div style="left:5px;top:654px;width:61px;height:58px;border:1px solid;border-color:#f8f8f8 #c0c0c0 #c0c0c0 #f8f8f8"></div>
<div class="sbt" style="left:2.6px;top:665px;width:64px;letter-spacing:1.2px">Delete</div>
<div class="sbt" style="left:2.6px;top:682px;width:64px;letter-spacing:1.3px">All</div>
</div></body></html>
